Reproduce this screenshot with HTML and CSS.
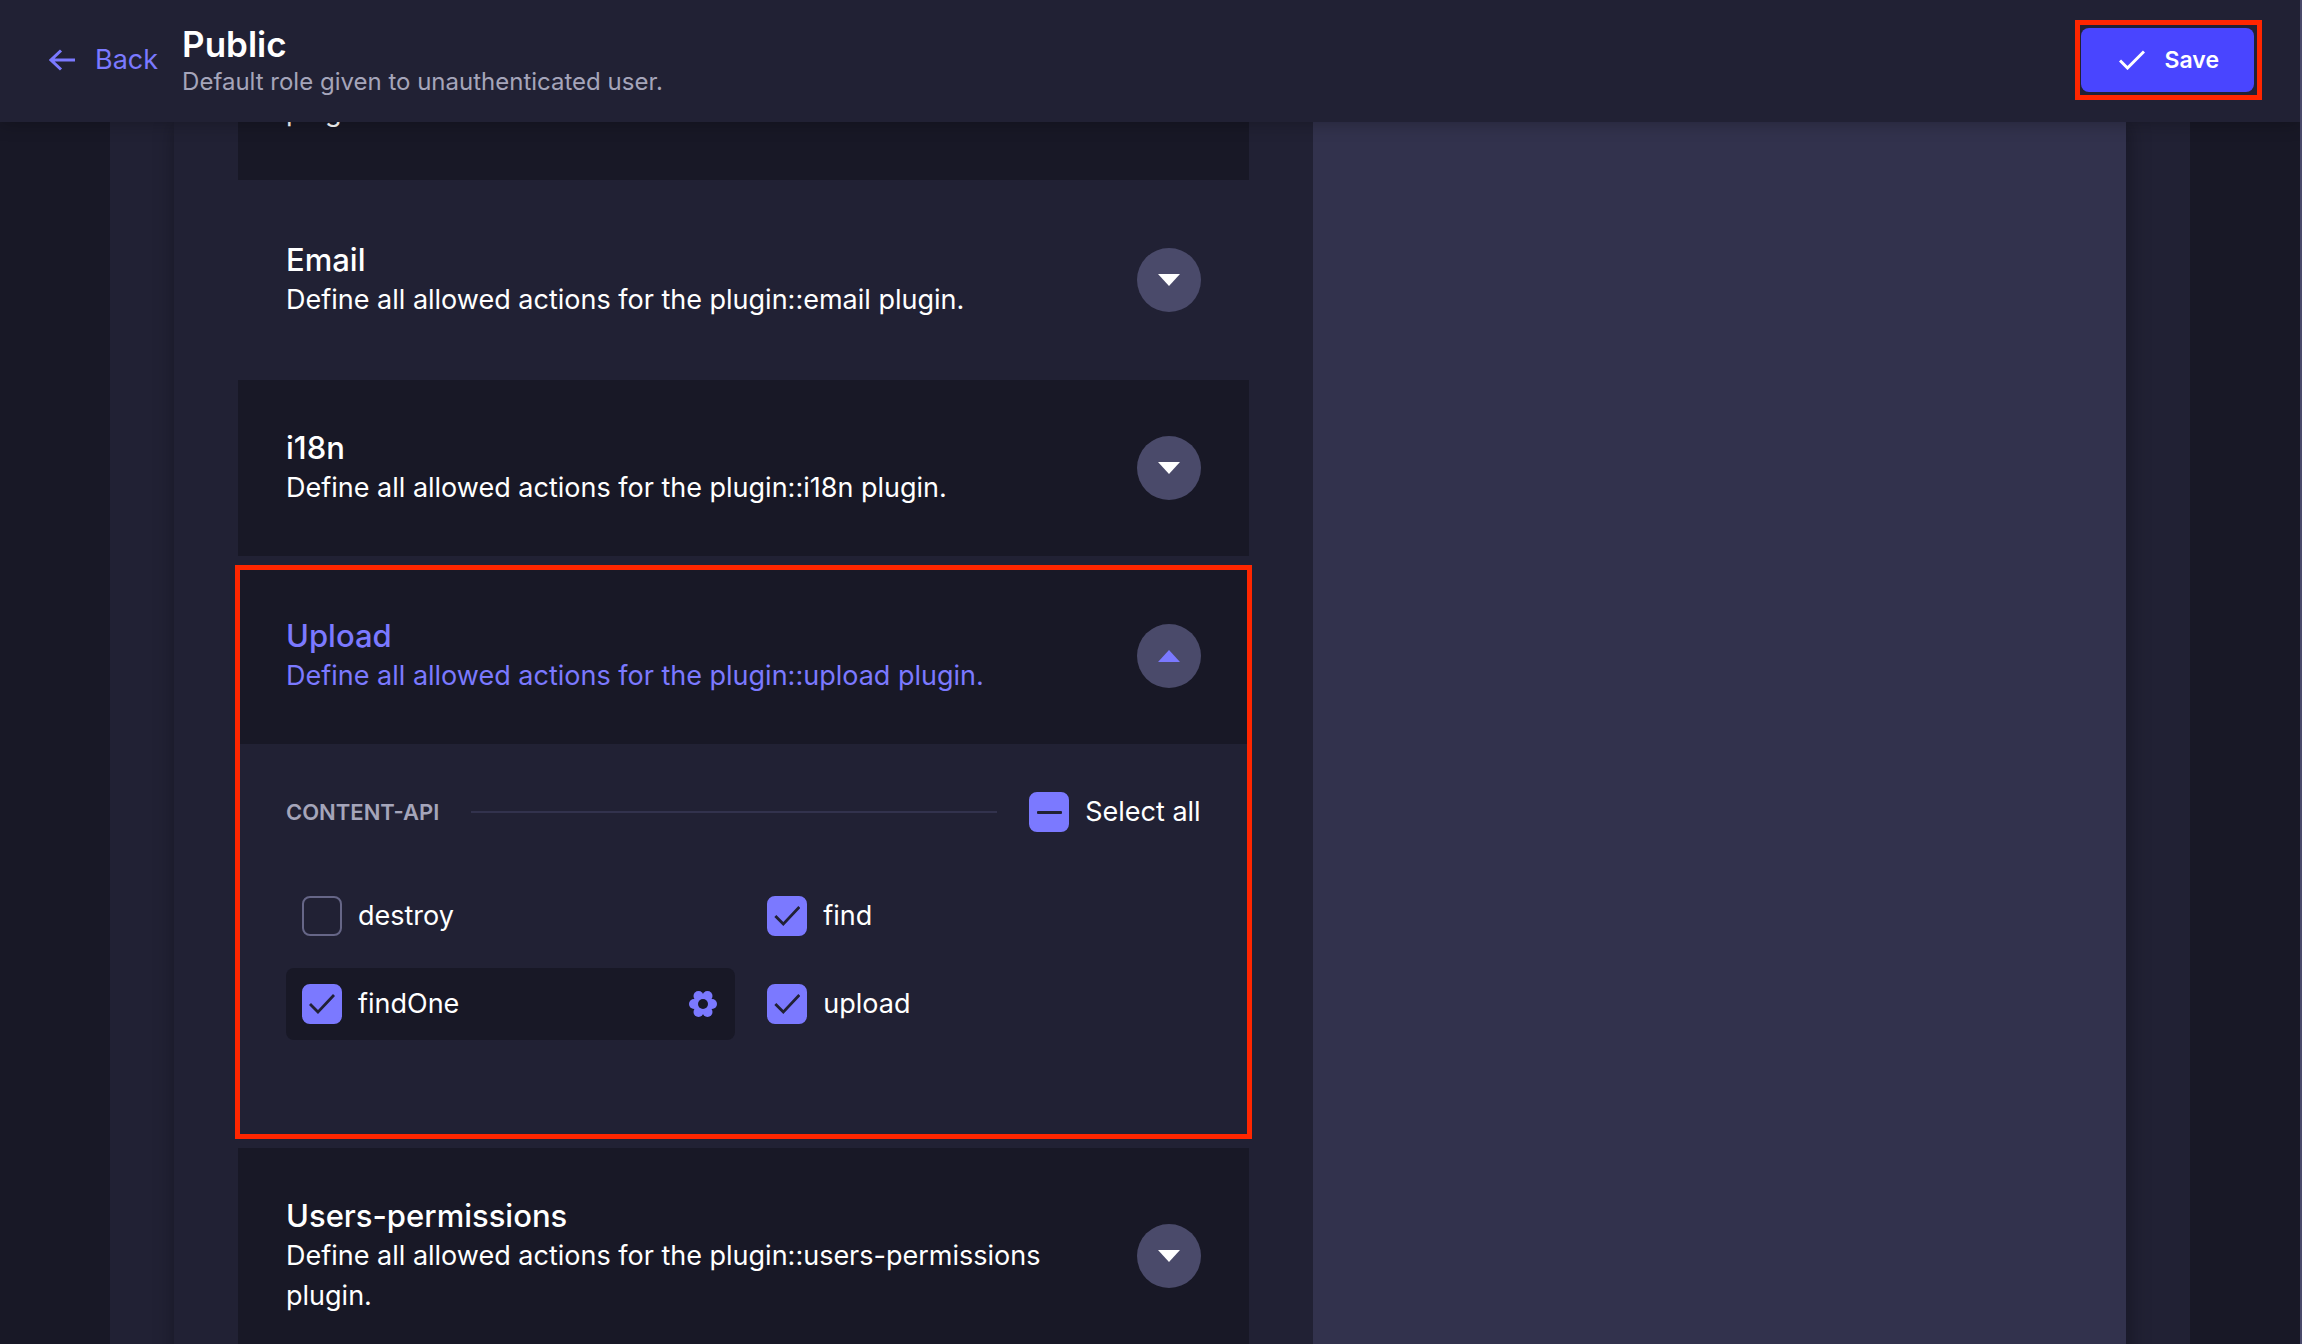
FILE: index.html
```html
<!DOCTYPE html>
<html lang="en">
<head>
<meta charset="utf-8">
<title>Public role</title>
<link rel="stylesheet" href="styles.css">
</head>
<body>
<header class="topbar">
  <a class="back" href="#"><svg class="back-icon" viewBox="0 0 26 22" aria-hidden="true"><path d="M12 1.5 2 11l10 9.500M2 11h24"/></svg>Back</a>
  <div class="heading">
    <h1>Public</h1>
    <p>Default role given to unauthenticated user.</p>
  </div>
  <div class="save-frame">
    <button class="save" type="button"><svg class="save-icon" viewBox="0 0 26 20" aria-hidden="true"><path d="M1 10.500 8.500 18 25 1.500"/></svg>Save</button>
  </div>
</header>
<main class="page">
  <div class="panel">
    <div class="permissions">
      <div class="accordions">
        <section class="accordion dark">
          <div class="accordion-head">
            <div class="accordion-text"><p>plugin.</p></div>
          </div>
        </section>
        <section class="accordion">
          <div class="accordion-head">
            <div class="accordion-text"><h2>Email</h2><p>Define all allowed actions for the plugin::email plugin.</p></div>
            <button class="toggle" type="button" aria-label="Expand Email"><svg viewBox="0 0 22 12"><path d="M0 0h22L11 12z"/></svg></button>
          </div>
        </section>
        <section class="accordion dark">
          <div class="accordion-head">
            <div class="accordion-text"><h2>i18n</h2><p>Define all allowed actions for the plugin::i18n plugin.</p></div>
            <button class="toggle" type="button" aria-label="Expand i18n"><svg viewBox="0 0 22 12"><path d="M0 0h22L11 12z"/></svg></button>
          </div>
        </section>
        <section class="accordion dark open">
          <div class="accordion-head">
            <div class="accordion-text"><h2>Upload</h2><p>Define all allowed actions for the plugin::upload plugin.</p></div>
            <button class="toggle" type="button" aria-label="Collapse Upload" aria-expanded="true"><svg viewBox="0 0 22 12"><path d="M0 12h22L11 0z"/></svg></button>
          </div>
          <div class="accordion-body">
            <div class="group-head">
              <h3>CONTENT-API</h3>
              <hr>
              <label class="check"><input class="partial" type="checkbox">Select all</label>
            </div>
            <div class="actions">
              <div class="action"><label class="check"><input type="checkbox">destroy</label></div>
              <div class="action"><label class="check"><input type="checkbox" checked>find</label></div>
              <div class="action selected">
                <label class="check"><input type="checkbox" checked>findOne</label>
                <button class="gear" type="button" aria-label="Show bound route"><svg viewBox="0 0 28 26"><circle cx="5" cy="13" r="5"/><circle cx="23" cy="13" r="5"/><circle cx="9.5" cy="5" r="5"/><circle cx="18.5" cy="5" r="5"/><circle cx="9.5" cy="21" r="5"/><circle cx="18.5" cy="21" r="5"/><circle cx="14" cy="13" r="10"/><circle class="gear-hole" cx="14" cy="13" r="5"/></svg></button>
              </div>
              <div class="action"><label class="check"><input type="checkbox" checked>upload</label></div>
            </div>
          </div>
        </section>
        <section class="accordion dark">
          <div class="accordion-head">
            <div class="accordion-text"><h2>Users-permissions</h2><p>Define all allowed actions for the plugin::users-permissions plugin.</p></div>
            <button class="toggle" type="button" aria-label="Expand Users-permissions"><svg viewBox="0 0 22 12"><path d="M0 0h22L11 12z"/></svg></button>
          </div>
        </section>
      </div>
      <aside class="routes"></aside>
    </div>
  </div>
</main>
</body>
</html>
```
FILE: styles.css
```css
* {
  box-sizing: border-box;
}

body {
  margin: 0;
  height: 100vh;
  display: flex;
  flex-direction: column;
  overflow: hidden;
  background: #181826;
  border-right: 2px solid #4a4a6a;
  color: #fff;
  font-family: Inter, "Liberation Sans", sans-serif;
  font-size: 27px;
  line-height: 40px;
}

h1, h2, h3, p {
  margin: 0;
}

button {
  font: inherit;
  color: inherit;
  border: 0;
  padding: 0;
  cursor: pointer;
}

svg {
  display: block;
}

/* Top bar */
.topbar {
  position: relative;
  z-index: 1;
  flex: none;
  display: flex;
  align-items: center;
  min-height: 122px;
  padding: 0 38px 3px 49px;
  background: #212134;
  box-shadow: 0 2px 16px rgba(3, 3, 5, 0.25);
}

.back {
  display: flex;
  align-items: center;
  gap: 20px;
  margin-right: 24px;
  color: #7b79ff;
  text-decoration: none;
}

.back-icon {
  width: 26px;
  height: 22px;
  fill: none;
  stroke: currentColor;
  stroke-width: 3;
}

.heading h1 {
  font-size: 35px;
  font-weight: 600;
  line-height: 44px;
}

.heading p {
  font-size: 24px;
  line-height: 32px;
  color: #a5a5ba;
}

.save-frame {
  margin-left: auto;
  padding: 3px 3px 3px 1px;
  border: 5px solid #ff2600;
}

.save {
  display: flex;
  align-items: center;
  gap: 20px;
  height: 64px;
  padding: 0 35px 0 38px;
  border-radius: 8px;
  background: #4945ff;
  font-size: 23px;
  font-weight: 600;
}

.save-icon {
  width: 26px;
  height: 20px;
  fill: none;
  stroke: currentColor;
  stroke-width: 3;
}

/* Permissions panel */
.page {
  flex: 1;
  min-height: 0;
  padding: 0 110px;
  overflow: hidden;
}

.panel {
  padding: 0 64px;
  background: #212134;
}

.permissions {
  display: grid;
  grid-template-columns: 7fr 5fr;
  background: #212134;
  box-shadow: 2px 2px 20px rgba(3, 3, 5, 0.35);
}

.accordions {
  display: flex;
  flex-direction: column;
  gap: 12px;
  margin-top: -78px;
  padding: 0 64px;
}

.routes {
  background: #32324d;
}

.accordion-head {
  display: flex;
  align-items: center;
  justify-content: space-between;
  gap: 32px;
  padding: 48px;
}

.dark .accordion-head {
  background: #181826;
}

.accordion h2 {
  font-size: 31px;
  font-weight: 500;
  line-height: 40px;
}

.toggle {
  flex: none;
  display: grid;
  place-items: center;
  width: 64px;
  height: 64px;
  border-radius: 50%;
  background: #4a4a6a;
}

.toggle svg {
  width: 22px;
  height: 12px;
  fill: currentColor;
}

.open {
  outline: 5px solid #ff2600;
  outline-offset: -2px;
}

.open .accordion-head {
  color: #7b79ff;
}

.accordion-body {
  padding: 48px 48px 96px;
}

.group-head {
  display: flex;
  align-items: center;
  gap: 32px;
  margin-bottom: 48px;
}

.group-head h3 {
  font-size: 22px;
  font-weight: 600;
  color: #a5a5ba;
}

.group-head hr {
  flex: 1;
  height: 2px;
  margin: 0;
  border: 0;
  background: #32324d;
}

.actions {
  display: grid;
  grid-template-columns: 1fr 1fr;
  gap: 16px;
}

.action {
  display: flex;
  align-items: center;
  justify-content: space-between;
  padding: 16px;
  border-radius: 8px;
}

.selected {
  background: #181826;
}

.check {
  display: flex;
  align-items: center;
  gap: 16px;
}

.check input {
  appearance: none;
  display: grid;
  place-items: center;
  width: 40px;
  height: 40px;
  margin: 0;
  border: 2px solid #666687;
  border-radius: 8px;
}

.check input:checked,
.check input.partial {
  border-color: #7b79ff;
  background: #7b79ff;
}

.check input:checked::before {
  content: "";
  width: 26px;
  height: 20px;
  background: #212134;
  clip-path: polygon(0 11px, 2px 9px, 9px 16px, 24px 0, 26px 2px, 9px 20px);
}

.check input.partial::before {
  content: "";
  width: 25px;
  height: 3px;
  border-radius: 1px;
  background: #212134;
}

.gear {
  padding: 0 2px;
  background: none;
  color: #7b79ff;
}

.gear svg {
  width: 28px;
  height: 26px;
  fill: currentColor;
}

.gear .gear-hole {
  fill: #181826;
}
```
